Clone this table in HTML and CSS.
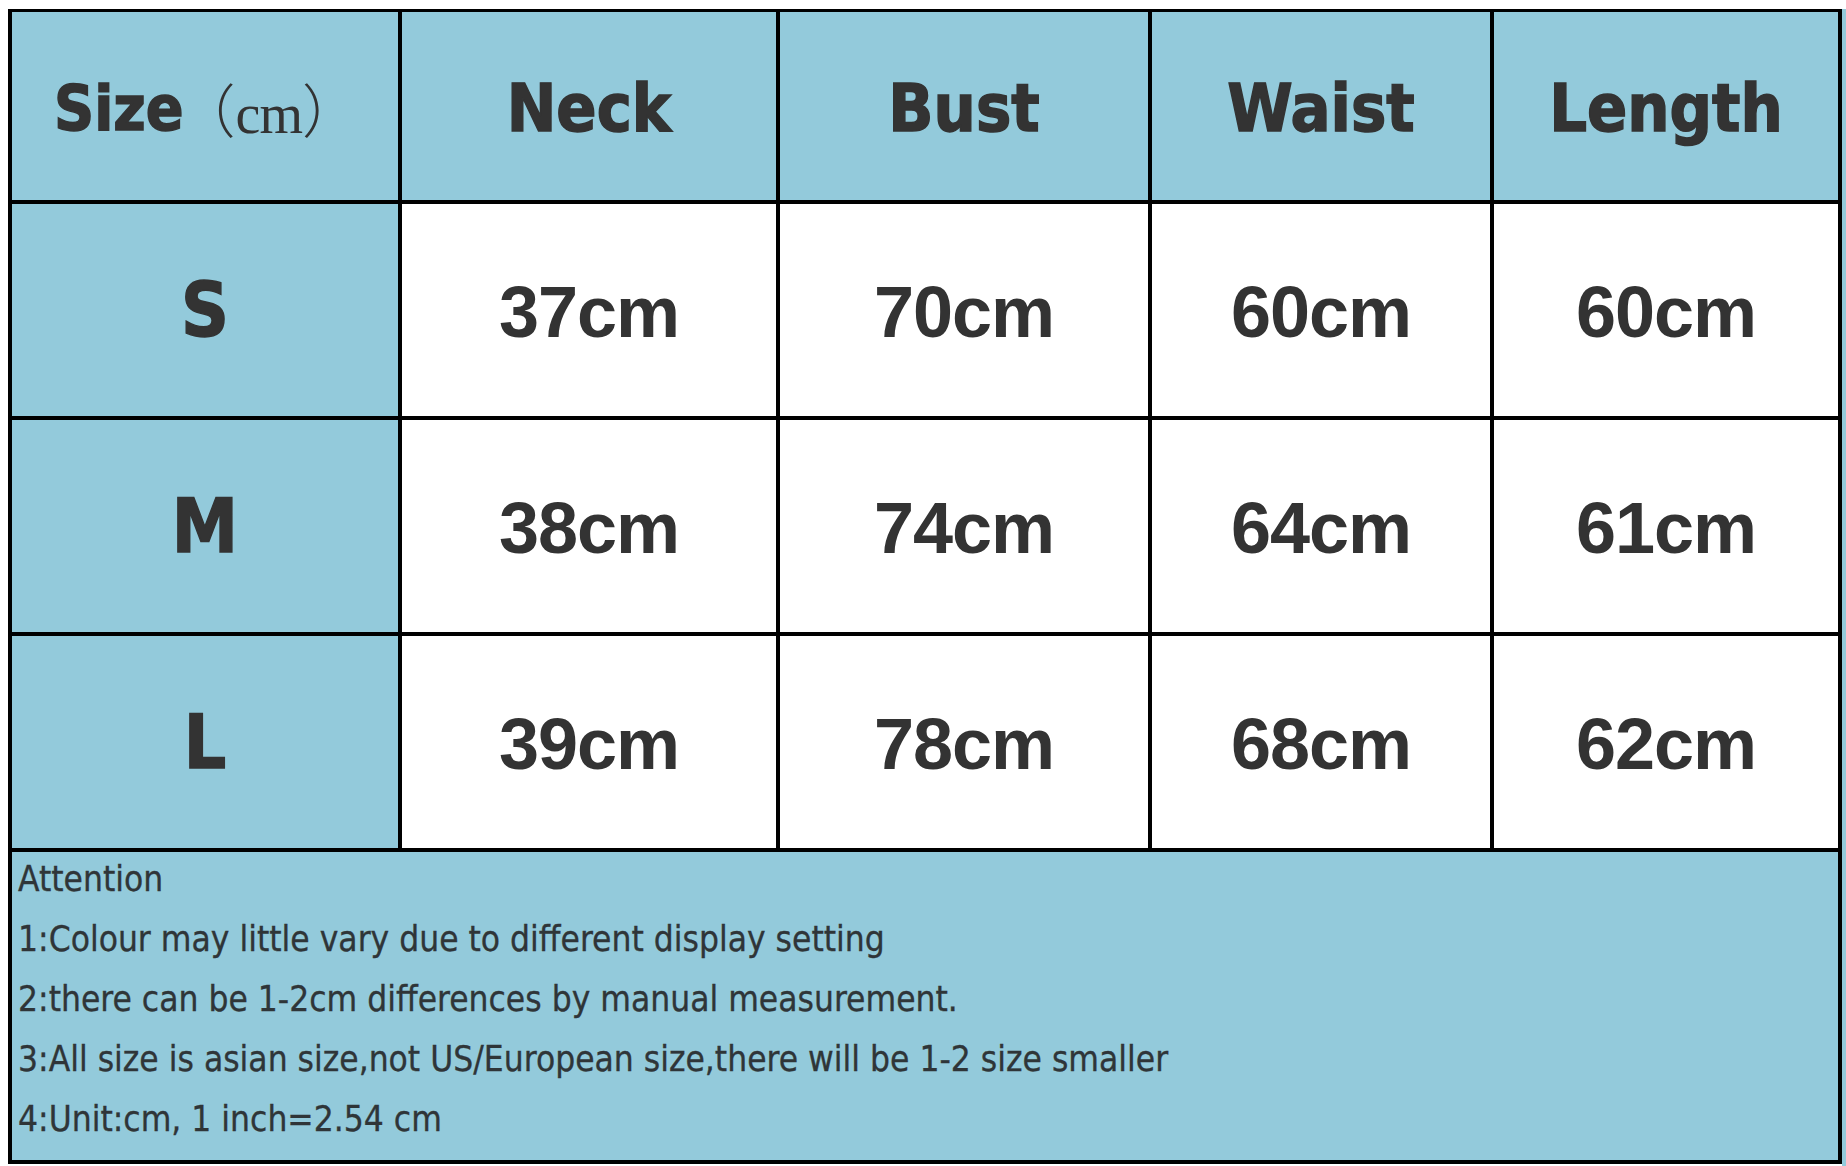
FILE: index.html
```html
<!DOCTYPE html>
<html>
<head>
<meta charset="utf-8">
<title>Size chart</title>
<link rel="stylesheet" href="styles.css">
</head>
<body>
<div class="page">
  <div class="sheet">
    <div class="cell head"><span class="size-label">Size</span><span class="unit">（<span class="unit-cm">cm</span>）</span></div>
    <div class="cell head">Neck</div>
    <div class="cell head">Bust</div>
    <div class="cell head">Waist</div>
    <div class="cell head">Length</div>

    <div class="cell label">S</div>
    <div class="cell value">37cm</div>
    <div class="cell value">70cm</div>
    <div class="cell value">60cm</div>
    <div class="cell value">60cm</div>

    <div class="cell label">M</div>
    <div class="cell value">38cm</div>
    <div class="cell value">74cm</div>
    <div class="cell value">64cm</div>
    <div class="cell value">61cm</div>

    <div class="cell label">L</div>
    <div class="cell value">39cm</div>
    <div class="cell value">78cm</div>
    <div class="cell value">68cm</div>
    <div class="cell value">62cm</div>

    <div class="cell notes">
      <p>Attention</p>
      <p>1:Colour may little vary due to different display setting</p>
      <p>2:there can be 1-2cm differences by manual measurement.</p>
      <p>3:All size is asian size,not US/European size,there will be 1-2 size smaller</p>
      <p>4:Unit:cm, 1 inch=2.54 cm</p>
    </div>
  </div>
  <div class="edge"></div>
</div>
</body>
</html>
```

FILE: styles.css
```css
html, body {
  margin: 0;
  padding: 0;
  background: #ffffff;
}

.page {
  display: flex;
  align-items: flex-start;
  padding: 9px 0 0 8px;
  width: 1846px;
  height: 1166px;
  box-sizing: border-box;
  overflow: hidden;
}

.sheet {
  display: grid;
  grid-template-columns: 386px 374px 368px 338px 344px;
  grid-template-rows: 188px 212px 212px 212px 308px;
  gap: 4px;
  padding: 3px 4px 4px 4px;
  background: #000000;
}

.edge {
  width: 4px;
  height: 1157px;
  background: #93cadb;
}

.cell {
  display: flex;
  align-items: center;
  justify-content: center;
  color: #333333;
  background: #ffffff;
}

.head {
  background: #93cadb;
  font-family: "DejaVu Sans", sans-serif;
  font-stretch: condensed;
  font-weight: bold;
  font-size: 66px;
  -webkit-text-stroke: 1.4px #333333;
  padding-top: 4px;
  box-sizing: border-box;
}

.size-head {
  justify-content: flex-start;
}

.size-label {
  font-size: 62px;
}

.unit {
  font-family: "Noto Sans CJK SC", sans-serif;
  font-weight: 300;
  font-size: 58px;
  -webkit-text-stroke: 0;
  margin-left: -6px;
  margin-right: -4px;
}

.unit-cm {
  font-family: "Liberation Serif", serif;
  font-weight: normal;
  font-size: 56px;
  letter-spacing: -1px;
}

.label {
  background: #93cadb;
  font-family: "DejaVu Sans", sans-serif;
  font-stretch: condensed;
  font-weight: bold;
  font-size: 74px;
  -webkit-text-stroke: 1.4px #333333;
}

.value {
  font-family: "Liberation Sans", Arial, sans-serif;
  font-weight: bold;
  font-size: 72px;
  letter-spacing: -1px;
  padding-top: 4px;
  box-sizing: border-box;
}

.notes {
  grid-column: 1 / 6;
  background: #93cadb;
  display: block;
  padding-left: 6px;
  font-family: "DejaVu Sans", sans-serif;
  font-stretch: condensed;
  font-size: 35px;
  line-height: 60px;
  color: #2f3538;
  -webkit-text-stroke: 0.3px #2f3538;
}

.notes p {
  margin: 0;
}

.notes p:first-child {
  margin-top: -3px;
}
```
